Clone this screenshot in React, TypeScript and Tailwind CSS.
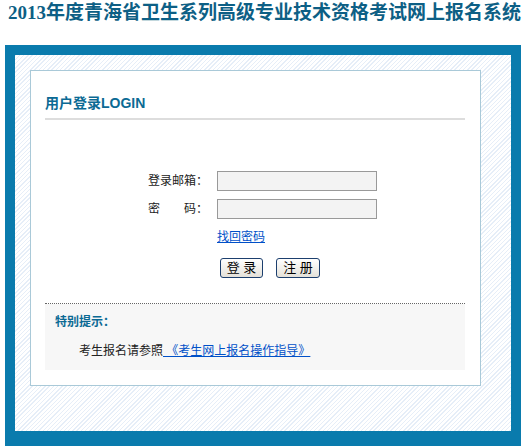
import React from "react";

export default function App() {
  const cjk = "font-['Liberation_Sans','Noto_Sans_CJK_SC',sans-serif]";
  return (
    <div className={`w-[527px] h-[447px] overflow-hidden bg-white ${cjk} text-[12px] text-[#222]`}>
      <div className="h-[45px] pl-[8px] pt-[3px] text-[19px] leading-[20px] font-semibold text-[#0d5f85] font-['Liberation_Serif','Noto_Sans_CJK_SC',serif] whitespace-nowrap">
        2013年度青海省卫生系列高级专业技术资格考试网上报名系统
      </div>
      <div className="ml-[5px] w-[516px] bg-[#0a7bad] p-[10px] pb-[15px]">
        <div className="bg-[repeating-linear-gradient(135deg,#e6eef8_0px,#e6eef8_1px,#ffffff_1px,#ffffff_3px)] pl-[15px] pt-[15px] pr-[30px] pb-[45px]">
          <div className="w-[451px] border border-[#a9c9d8] bg-white pl-[14px] pr-[15px] pb-[15px]">
            <div className="pt-[22px] pb-[5px] border-b-2 border-[#dddddd] text-[14px] leading-[20px] font-bold text-[#0b6a94]">
              用户登录LOGIN
            </div>
            <div className="pt-[51px] flex flex-col">
              <div className="flex items-center h-[20px]">
                <div className="w-[163px] text-right leading-[20px]">登录邮箱：</div>
                <input className="ml-[9px] w-[160px] h-[20px] border border-[#999] bg-[#f3f3f3] outline-none" />
              </div>
              <div className="flex items-center h-[20px] mt-[8px]">
                <div className="w-[163px] text-right leading-[20px] whitespace-pre">密　　码：</div>
                <input type="password" className="ml-[9px] w-[160px] h-[20px] border border-[#999] bg-[#f3f3f3] outline-none" />
              </div>
              <div className="mt-[8px] pl-[172px] leading-[20px]">
                <a href="#" className="text-[#0050c8] underline">找回密码</a>
              </div>
              <div className="mt-[11px] pl-[175px] flex gap-[13px]">
                <button className="w-[43px] h-[20px] border border-[#1c3f6e] rounded-[3px] bg-[linear-gradient(#ffffff,#e4e1d9)] text-[13px] leading-[18px] text-black">登 录</button>
                <button className="w-[44px] h-[20px] border border-[#1c3f6e] rounded-[3px] bg-[linear-gradient(#ffffff,#e4e1d9)] text-[13px] leading-[18px] text-black">注 册</button>
              </div>
            </div>
            <div className="mt-[25px] border-t border-dotted border-[#666]" />
            <div className="bg-[#f7f7f7] pl-[10px] pt-[8px] pb-[9px]">
              <div className="leading-[20px] font-bold text-[#0b6a94]">特别提示：</div>
              <div className="mt-[9px] leading-[20px] pl-[24px] text-[#222]">
                考生报名请参照<a href="#" className="text-[#0050c8] underline"> 《考生网上报名操作指导》</a>
              </div>
            </div>
          </div>
        </div>
      </div>
    </div>
  );
}
